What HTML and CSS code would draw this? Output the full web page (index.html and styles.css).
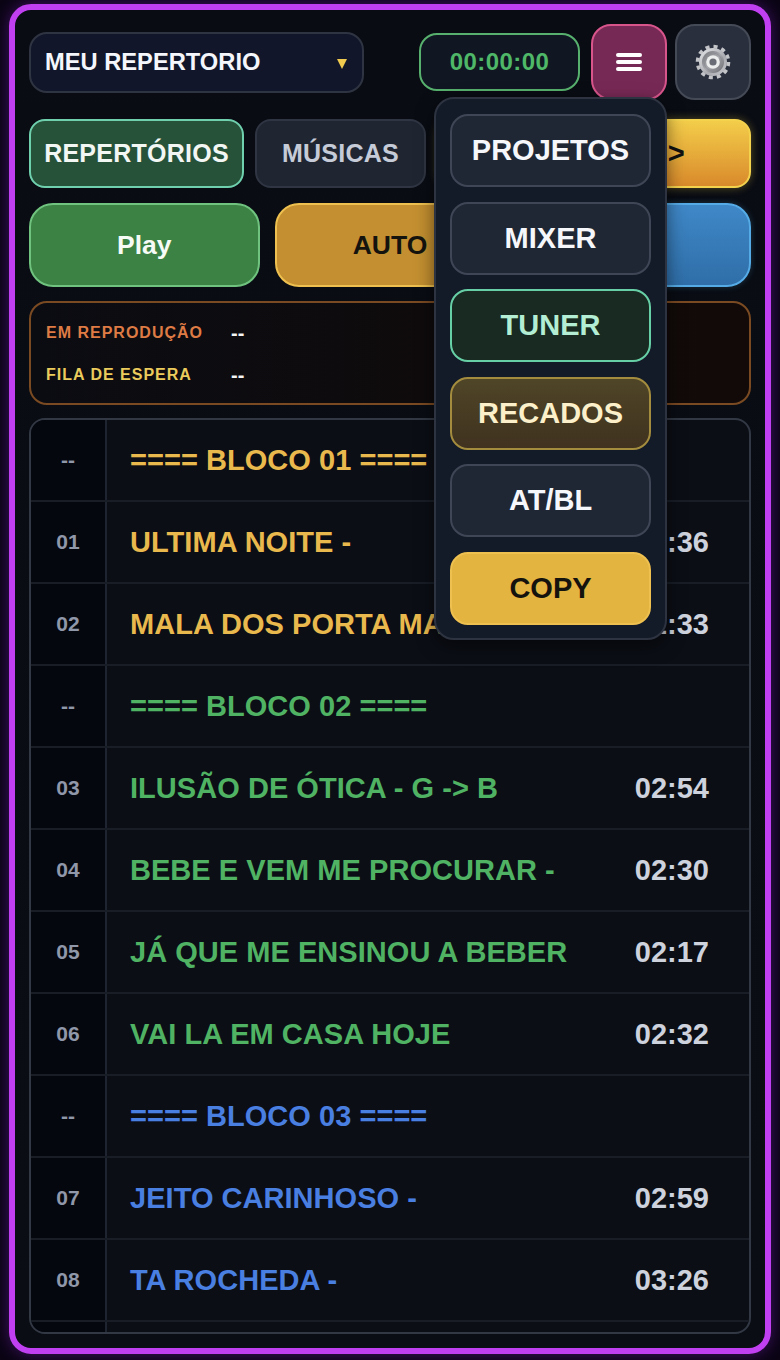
FILE: index.html
```html
<!DOCTYPE html>
<html lang="en">

<head>
  <meta charset="UTF-8">
  <meta name="viewport" content="width=device-width, initial-scale=1.0">
  <title>Meu Repertorio</title>
  <link rel="stylesheet" href="styles.css">
</head>

<body>
  <div class="frame">
    <div class="top-row">
      <div class="select-box">
        <span>MEU REPERTORIO</span>
        <span class="select-arrow"></span>
      </div>
      <div class="timer">00:00:00</div>
      <button class="icon-btn menu-btn" type="button">
        <span class="menu-bar"></span>
        <span class="menu-bar"></span>
        <span class="menu-bar"></span>
      </button>
      <button class="icon-btn gear-btn" type="button">
        <svg class="gear" viewBox="0 0 36 36" width="36" height="36">
          <defs>
            <linearGradient id="gearFill" x1="0" y1="0" x2="1" y2="1">
              <stop offset="0" stop-color="#e6e7ea" />
              <stop offset="0.6" stop-color="#a9abb0" />
              <stop offset="1" stop-color="#c9cacf" />
            </linearGradient>
            <linearGradient id="gearBand" x1="0" y1="0" x2="1" y2="1">
              <stop offset="0" stop-color="#6f7178" />
              <stop offset="0.5" stop-color="#a6a8ad" />
              <stop offset="1" stop-color="#63656c" />
            </linearGradient>
          </defs>
          <!-- teeth are a dashed ring -->
          <circle cx="18" cy="18" r="15.5" fill="none" stroke="#c2c4c8" stroke-width="3.6" stroke-dasharray="4.06 4.06" />
          <circle cx="18" cy="18" r="14" fill="url(#gearFill)" />
          <circle cx="18" cy="18" r="11" fill="url(#gearBand)" />
          <circle cx="18" cy="18" r="9" fill="none" stroke="#8a8c92" stroke-width="0.8" />
          <circle cx="18" cy="18" r="6.8" fill="#eceded" />
          <circle cx="18" cy="18" r="3.6" fill="#6a6d75" />
        </svg>
      </button>
    </div>

    <div class="tab-row">
      <button class="tab tab-active" type="button">REPERTÓRIOS</button>
      <button class="tab tab-plain" type="button">MÚSICAS</button>
      <button class="tab tab-next" type="button">&gt;</button>
    </div>

    <div class="action-row">
      <button class="action action-play" type="button">Play</button>
      <button class="action action-auto" type="button">AUTO</button>
      <button class="action action-blue" type="button"></button>
    </div>

    <div class="info-panel">
      <div class="info-line">
        <span class="info-label label-now">EM REPRODUÇÃO</span>
        <span class="info-value">--</span>
      </div>
      <div class="info-line">
        <span class="info-label label-queue">FILA DE ESPERA</span>
        <span class="info-value">--</span>
      </div>
    </div>

    <div class="song-table">
      <div class="song-row">
        <div class="song-num">--</div>
        <div class="song-title gold">==== BLOCO 01 ====</div>
      </div>
      <div class="song-row">
        <div class="song-num">01</div>
        <div class="song-title gold">ULTIMA NOITE -</div>
        <div class="song-time">02:36</div>
      </div>
      <div class="song-row">
        <div class="song-num">02</div>
        <div class="song-title gold">MALA DOS PORTA MALAS -</div>
        <div class="song-time">02:33</div>
      </div>
      <div class="song-row">
        <div class="song-num">--</div>
        <div class="song-title green">==== BLOCO 02 ====</div>
      </div>
      <div class="song-row">
        <div class="song-num">03</div>
        <div class="song-title green">ILUSÃO DE ÓTICA - G -&gt; B</div>
        <div class="song-time">02:54</div>
      </div>
      <div class="song-row">
        <div class="song-num">04</div>
        <div class="song-title green">BEBE E VEM ME PROCURAR -</div>
        <div class="song-time">02:30</div>
      </div>
      <div class="song-row">
        <div class="song-num">05</div>
        <div class="song-title green">JÁ QUE ME ENSINOU A BEBER</div>
        <div class="song-time">02:17</div>
      </div>
      <div class="song-row">
        <div class="song-num">06</div>
        <div class="song-title green">VAI LA EM CASA HOJE</div>
        <div class="song-time">02:32</div>
      </div>
      <div class="song-row">
        <div class="song-num">--</div>
        <div class="song-title blue">==== BLOCO 03 ====</div>
      </div>
      <div class="song-row">
        <div class="song-num">07</div>
        <div class="song-title blue">JEITO CARINHOSO -</div>
        <div class="song-time">02:59</div>
      </div>
      <div class="song-row">
        <div class="song-num">08</div>
        <div class="song-title blue">TA ROCHEDA -</div>
        <div class="song-time">03:26</div>
      </div>
      <div class="song-row">
        <div class="song-num"></div>
        <div class="song-title"></div>
      </div>
    </div>

    <div class="menu-drop">
      <button class="drop-item" type="button">PROJETOS</button>
      <button class="drop-item" type="button">MIXER</button>
      <button class="drop-item drop-tuner" type="button">TUNER</button>
      <button class="drop-item drop-recados" type="button">RECADOS</button>
      <button class="drop-item" type="button">AT/BL</button>
      <button class="drop-item drop-copy" type="button">COPY</button>
    </div>
  </div>
</body>

</html>
```

FILE: styles.css
```css
* {
  box-sizing: border-box;
}

html,
body {
  height: 100%;
}

body {
  margin: 0;
  padding: 4px 9px 6px;
  background-color: #0a0414;
  font-family: "Liberation Sans", Arial, sans-serif;
  overflow: hidden;
}

button {
  font-family: inherit;
  padding: 0;
}

.frame {
  position: relative;
  display: flex;
  flex-direction: column;
  height: 1350px;
  padding: 14px 14px 14px;
  border: 6px solid #c03ff0;
  border-radius: 22px;
  background: linear-gradient(180deg, #090c13, #0a0d13);
  box-shadow: 0 0 16px rgba(150, 40, 220, 0.4);
}

/* top row */
.top-row {
  display: flex;
  align-items: center;
  height: 76px;
}

.select-box {
  display: flex;
  justify-content: space-between;
  align-items: center;
  width: 335px;
  height: 61px;
  padding: 0 15px 0 14px;
  border: 2px solid #2f3442;
  border-radius: 18px;
  background-color: #11162a;
  color: #f4f6fb;
  font-size: 23.7px;
  font-weight: 700;
}

.select-arrow {
  width: 0;
  height: 0;
  margin-top: 4px;
  border-top: 10px solid #f0c94f;
  border-left: 5px solid transparent;
  border-right: 5px solid transparent;
}

.timer {
  width: 161px;
  height: 58px;
  margin-left: 55px;
  border: 2px solid #57b06d;
  border-radius: 18px;
  background-color: #101722;
  color: #4fb868;
  font-size: 24px;
  font-weight: 700;
  letter-spacing: 0.4px;
  line-height: 54px;
  text-align: center;
}

.icon-btn {
  display: flex;
  flex-direction: column;
  justify-content: center;
  align-items: center;
  width: 76px;
  height: 76px;
  border-radius: 20px;
}

.menu-btn {
  gap: 3.4px;
  margin-left: 11px;
  border: 2px solid #d8558c;
  background-color: #772955;
}

.menu-bar {
  width: 26px;
  height: 4px;
  border-radius: 2px;
  background-color: #fff;
}

.gear-btn {
  margin-left: 8px;
  border: 2px solid #454a57;
  background-color: #2a2f3d;
}

/* tabs */
.tab-row {
  display: flex;
  gap: 11px;
  height: 69px;
  margin-top: 19px;
}

.tab {
  border-radius: 16px;
  font-size: 25px;
  font-weight: 700;
  letter-spacing: 0.25px;
}

.tab-active {
  width: 215px;
  border: 2px solid #6fd0ae;
  background-color: #27523a;
  color: #f3f7f4;
}

.tab-plain {
  width: 171px;
  border: 2px solid #2f3542;
  background-color: #1f2632;
  color: #c6cbd8;
}

.tab-next {
  flex: 1;
  padding-right: 64px;
  border: 2px solid #f3d24e;
  background: linear-gradient(180deg, #f3cd4a, #d98a2b);
  color: #111;
  font-size: 29px;
  text-align: right;
  box-shadow: 0 0 8px rgba(240, 200, 70, 0.35);
}

/* play / auto */
.action-row {
  display: grid;
  grid-template-columns: repeat(3, 1fr);
  gap: 15px;
  height: 84px;
  margin-top: 15px;
}

.action {
  border-radius: 24px;
  font-size: 26.5px;
  font-weight: 700;
}

.action-play {
  border: 2px solid #6fc37f;
  background-color: #3d8245;
  color: #f6fbf6;
}

.action-auto {
  border: 2px solid #eec04f;
  background-color: #c38f30;
  color: #15130e;
}

.action-blue {
  border: 2px solid #55abe6;
  background: linear-gradient(180deg, #3f88c8, #2f6ea8);
  box-shadow: 0 0 6px rgba(85, 170, 230, 0.25);
}

/* now playing */
.info-panel {
  display: flex;
  flex-direction: column;
  justify-content: center;
  gap: 20px;
  height: 104px;
  margin-top: 14px;
  padding: 2px 15px 0;
  border: 2px solid #7a4a22;
  border-radius: 18px;
  background: linear-gradient(90deg, #0b0c12, #120a08);
}

.info-line {
  display: flex;
  align-items: center;
  height: 22px;
}

.info-label {
  width: 185px;
  font-size: 16px;
  font-weight: 700;
  letter-spacing: 1px;
}

.label-now {
  color: #de7b45;
}

.label-queue {
  color: #eacb5c;
}

.info-value {
  color: #f5f5f5;
  font-size: 20px;
  font-weight: 700;
}

/* song list */
.song-table {
  flex: 1;
  margin-top: 13px;
  border: 2px solid #323945;
  border-radius: 16px;
  background-color: #0b0e15;
  overflow: hidden;
}

.song-row {
  display: flex;
  align-items: center;
  height: 82px;
  border-bottom: 2px solid #181d26;
}

.song-num {
  display: flex;
  justify-content: center;
  align-items: center;
  flex: none;
  align-self: stretch;
  width: 76px;
  border-right: 2px solid #1f2530;
  background-color: #05070f;
  color: #8f97a9;
  font-size: 21px;
  font-weight: 700;
}

.song-title {
  flex: 1;
  padding-left: 23px;
  font-size: 29px;
  font-weight: 700;
  letter-spacing: 0.04px;
  white-space: nowrap;
}

.gold {
  color: #e9b94d;
}

.green {
  color: #50b364;
}

.blue {
  color: #4a7fe2;
}

.song-time {
  padding-right: 40px;
  color: #cdd2dd;
  font-size: 29px;
  font-weight: 700;
}

/* dropdown over the page */
.menu-drop {
  position: absolute;
  top: 87px;
  right: 98px;
  display: flex;
  flex-direction: column;
  gap: 14.5px;
  width: 233px;
  height: 543px;
  padding: 15px 14px;
  border: 2px solid #2d3340;
  border-radius: 20px;
  background-color: #141b28;
  box-shadow: 0 6px 18px rgba(0, 0, 0, 0.5);
}

.drop-item {
  flex: none;
  height: 73px;
  border: 2px solid #3f4655;
  border-radius: 18px;
  background-color: #1f2735;
  color: #f6f7fa;
  font-size: 29px;
  font-weight: 700;
}

.drop-tuner {
  border-color: #67cfa6;
  background-color: #182a21;
  color: #b3eed4;
}

.drop-recados {
  border-color: #a38c3e;
  background: linear-gradient(180deg, #4f4527, #40321f);
  color: #fbf0c9;
}

.drop-copy {
  border-color: #eec04f;
  background-color: #e3b43f;
  color: #15130e;
}
```
